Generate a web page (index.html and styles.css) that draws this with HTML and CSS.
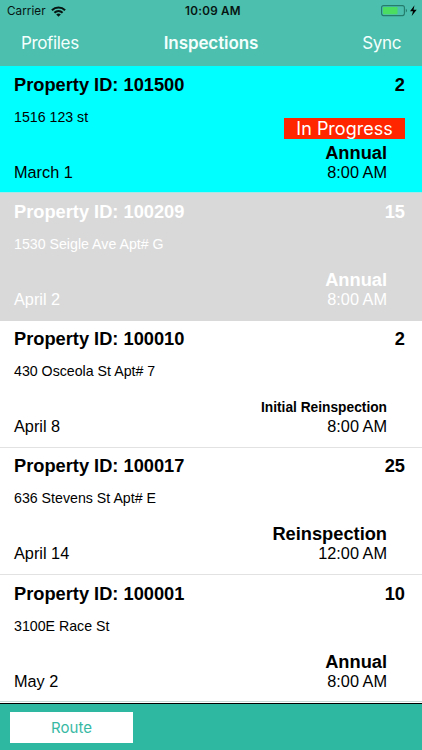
FILE: index.html
```html
<!DOCTYPE html>
<html lang="en">
<head>
<meta charset="utf-8">
<title>Inspections</title>
<link rel="stylesheet" href="styles.css">
</head>
<body>
<div class="app">
  <header class="header">
    <div class="status">
      <div class="carrier"><span>Carrier</span>
        <svg width="15" height="11" viewBox="0 0 15 11" fill="none" stroke="#061512" stroke-width="2.1"><path d="M.9 4.2C4.7.6 10.3.6 14.1 4.2M3.4 6.8c2.4-2.2 5.8-2.2 8.2 0"/><path d="M5.2 8.500c1.300-1.200 3.300-1.200 4.600 0L7.500 10.800z" fill="#061512" stroke="none"/></svg>
      </div>
      <div class="clock">10:09 AM</div>
      <div class="power">
        <svg width="36" height="12" viewBox="0 0 36 12"><rect x=".6" y=".6" width="22.8" height="10" rx="2" fill="none" stroke="#257b6c" stroke-width="1.1"/><rect x="2" y="2" width="14.5" height="7.2" rx=".6" fill="#4bdc62"/><path d="M24.8 3.8c1.6.5 1.6 3.1 0 3.6z" fill="#257b6c"/><path d="M33.5.3L29 6.2h3L30.7 10.9 35.7 4.8h-3.2z" fill="#000"/></svg>
      </div>
    </div>
    <nav class="nav"><span class="nav-left">Profiles</span><h1>Inspections</h1><span class="nav-right">Sync</span></nav>
  </header>
  <main class="list">
    <article class="row active">
      <div class="top"><h2>Property ID: 101500</h2><b>2</b></div>
      <div class="address"><span>1516 123 st</span><span class="badge">In Progress</span></div>
      <div class="kind">Annual</div>
      <div class="when"><span>March 1</span><span>8:00 AM</span></div>
    </article>
    <article class="row done">
      <div class="top"><h2>Property ID: 100209</h2><b>15</b></div>
      <div class="address"><span>1530 Seigle Ave Apt# G</span></div>
      <div class="kind">Annual</div>
      <div class="when"><span>April 2</span><span>8:00 AM</span></div>
    </article>
    <article class="row">
      <div class="top"><h2>Property ID: 100010</h2><b>2</b></div>
      <div class="address"><span>430 Osceola St Apt# 7</span></div>
      <div class="kind small">Initial Reinspection</div>
      <div class="when"><span>April 8</span><span>8:00 AM</span></div>
    </article>
    <article class="row">
      <div class="top"><h2>Property ID: 100017</h2><b>25</b></div>
      <div class="address"><span>636 Stevens St Apt# E</span></div>
      <div class="kind">Reinspection</div>
      <div class="when"><span>April 14</span><span>12:00 AM</span></div>
    </article>
    <article class="row">
      <div class="top"><h2>Property ID: 100001</h2><b>10</b></div>
      <div class="address"><span>3100E Race St</span></div>
      <div class="kind">Annual</div>
      <div class="when"><span>May 2</span><span>8:00 AM</span></div>
    </article>
  </main>
  <footer class="footer"><button class="route">Route</button></footer>
</div>
</body>
</html>
```
FILE: styles.css
```css
* { box-sizing: border-box; }
body { margin: 0; background: #fff; color: #000; font-family: "Liberation Sans", Arial, sans-serif; }
h1, h2 { margin: 0; }
.app { width: 422px; height: 750px; display: flex; flex-direction: column; overflow: hidden; }
.header { height: 66px; flex: none; background: #4cbfae; font-family: Inter, sans-serif; }
.status { height: 22px; display: grid; grid-template-columns: 1fr auto 1fr; align-items: center; padding: 0 5px 0 7px; color: #061512; font-size: 11.7px; line-height: 22px; }
.carrier { display: flex; align-items: center; gap: 5px; letter-spacing: .05px; }
.clock { padding-left: 2px; font-weight: 600; font-size: 11.7px; letter-spacing: .25px; }
.power { display: flex; justify-content: flex-end; }
.nav { height: 43px; display: grid; grid-template-columns: 1fr auto 1fr; align-items: center; padding: 0 21px; color: #f4fffd; font-size: 17px; line-height: 43px; letter-spacing: -.35px; }
.nav h1 { font-size: 17px; font-weight: 600; letter-spacing: -.1px; }
.nav-right { text-align: right; }
.list { height: 636.5px; flex: none; }
.row { height: 127.3px; padding: 7.5px 17px 0 14px; border-bottom: 1px solid #e2e2e2; }
.row:last-child { border-color: #c8d8d5; }
.active { background: #00ffff; border-color: #a9e6e6; }
.done { background: #d9d9d9; border-color: #d9d9d9; color: #fff; }
.top { display: flex; justify-content: space-between; height: 22px; line-height: 22px; font-size: 18.25px; }
.top h2 { font-size: 18.25px; }
.address { display: flex; justify-content: space-between; height: 48px; font-size: 14.2px; line-height: 42px; }
.badge { width: 121px; height: 21.5px; margin-top: 22px; background: #ff2600; color: #fff; font: 18px/22px Inter, sans-serif; text-align: center; }
.kind { height: 19px; padding-right: 18px; text-align: right; font-weight: bold; font-size: 18.25px; line-height: 18.4px; }
.small { font-size: 13.75px; line-height: 20px; }
.when { display: flex; justify-content: space-between; padding-right: 18px; font-size: 16.3px; line-height: 19px; }
.footer { flex: 1; padding: 8px 10px 0; border-top: 1px solid #000; background: #2eb7a1; }
.route { display: block; width: 123px; height: 31px; padding: 0; border: 0; background: #fff; color: #38b9a4; font: 15px/31px Inter, sans-serif; }
```
